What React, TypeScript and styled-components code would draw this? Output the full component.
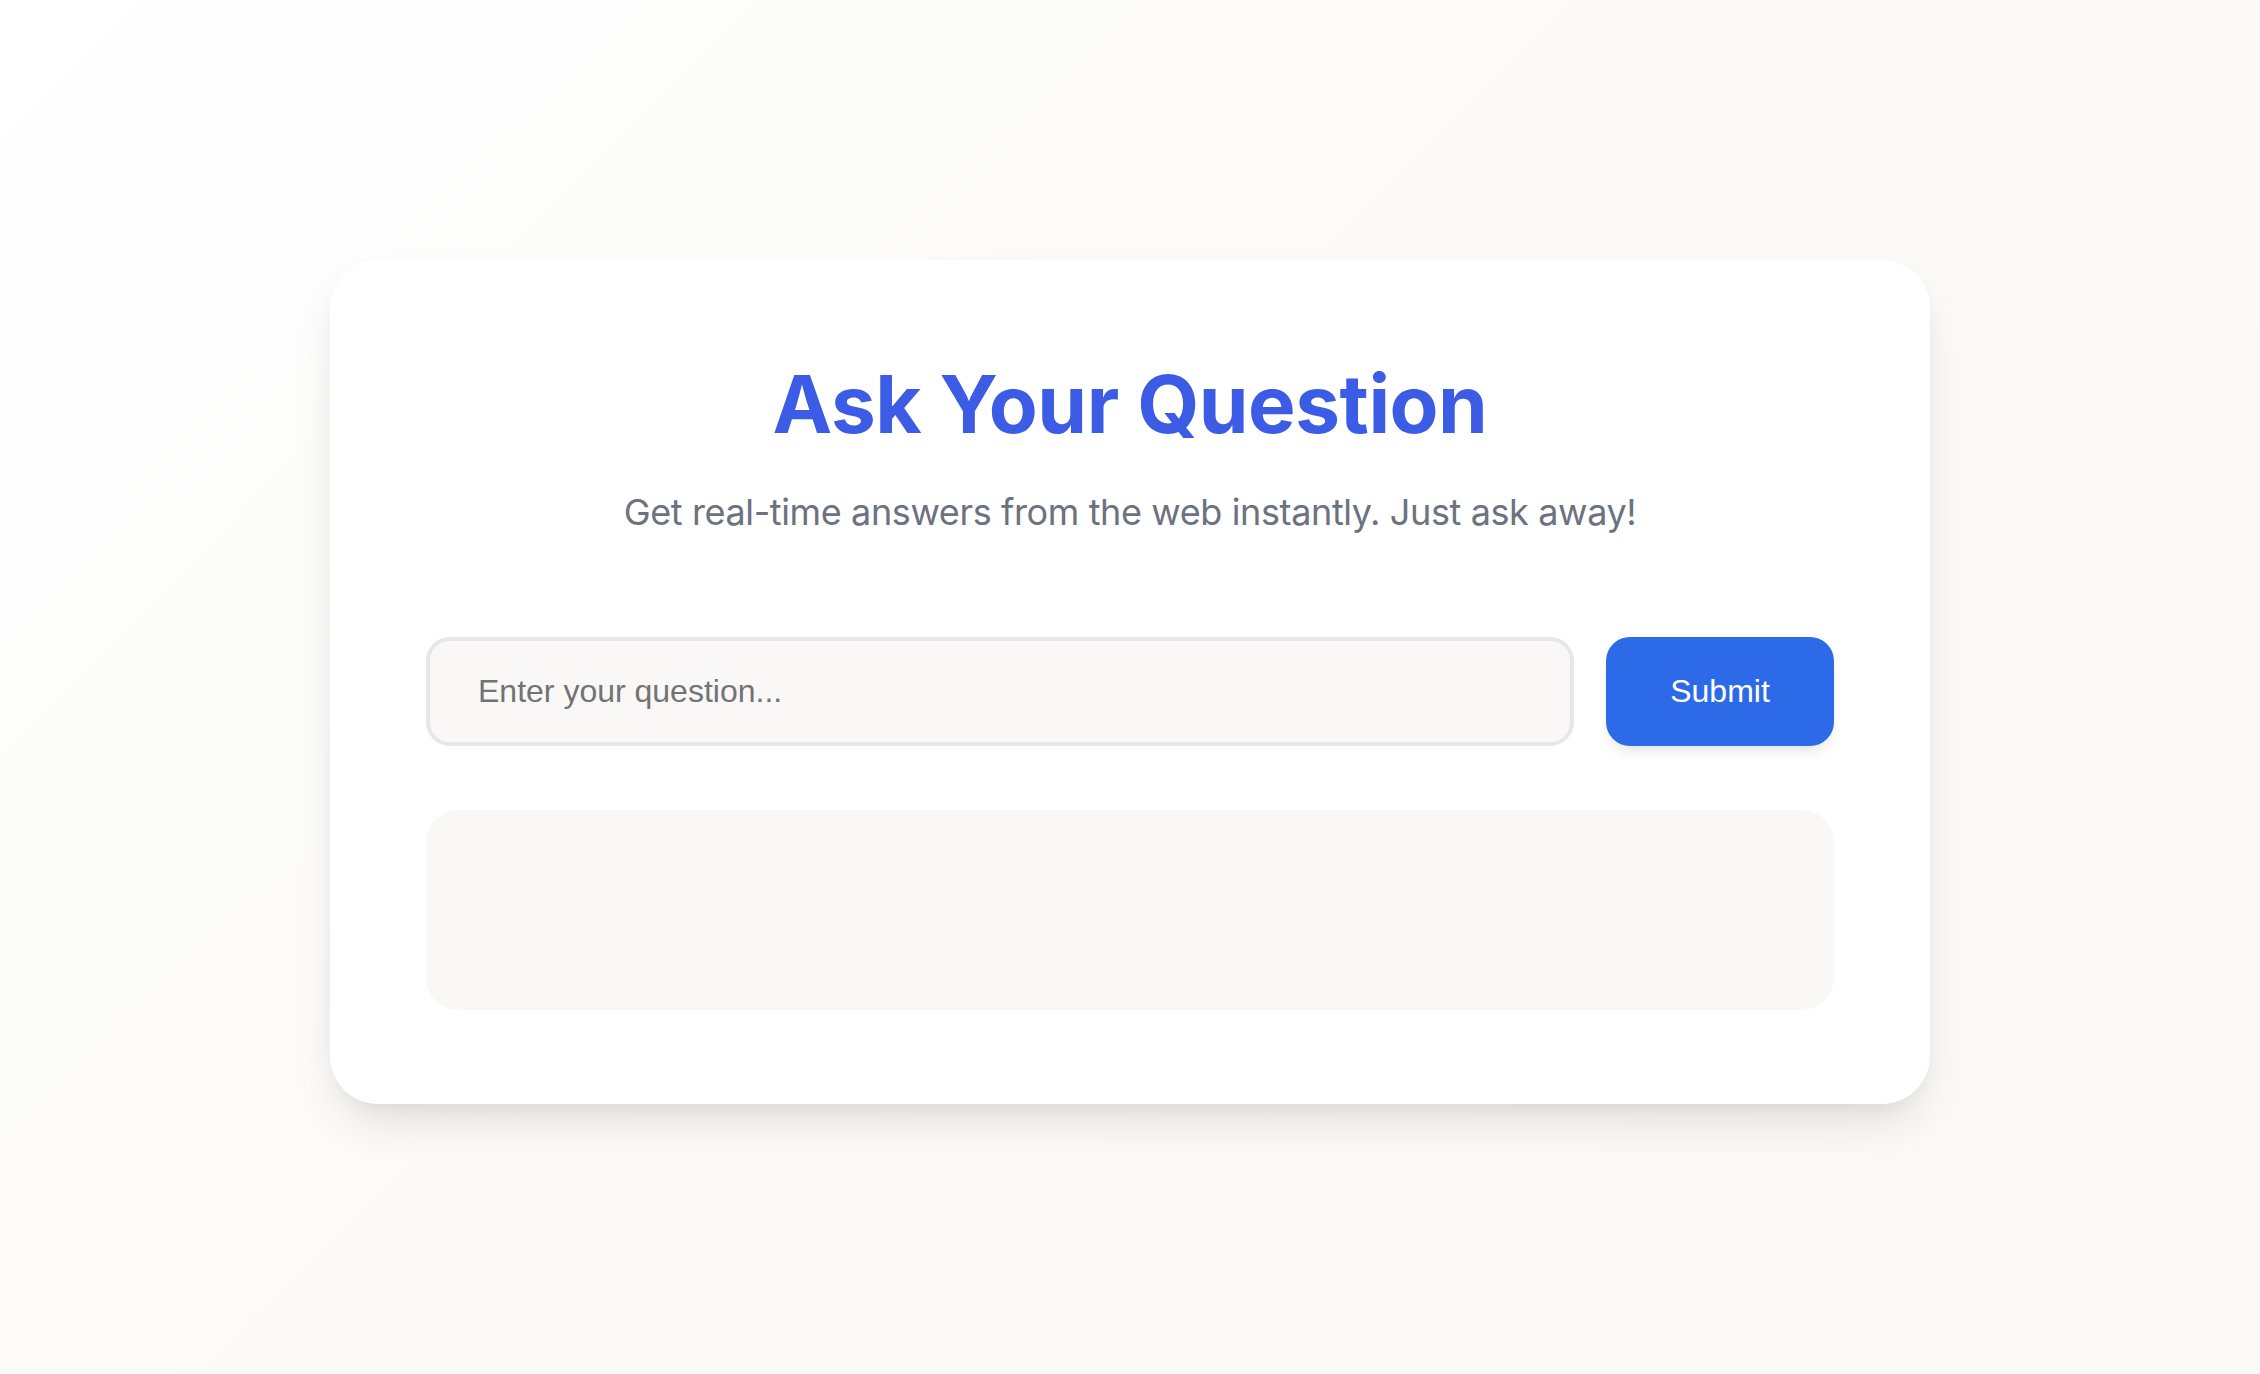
import styled, { createGlobalStyle } from "styled-components";

const GlobalStyle = createGlobalStyle`
  html, body {
    margin: 0;
    padding: 0;
  }
  body {
    background: linear-gradient(135deg, #ffffff 0%, #fbfaf9 45%, #faf9f7 100%);
    font-family: "Inter", "Liberation Sans", sans-serif;
  }
  * {
    box-sizing: border-box;
  }
`;

const Page = styled.main`
  min-height: 100vh;
  display: flex;
  align-items: center;
  justify-content: center;
  padding-bottom: 10px;
`;

const Card = styled.section`
  width: 1600px;
  background: #ffffff;
  border-radius: 48px;
  padding: 96px 96px 94px;
  box-shadow: 0 24px 48px -12px rgba(0, 0, 0, 0.13),
    0 8px 20px -8px rgba(0, 0, 0, 0.06);
  display: flex;
  flex-direction: column;
`;

const Title = styled.h1`
  margin: 0;
  font-family: "Inter", sans-serif;
  font-size: 80px;
  line-height: 96px;
  font-weight: 700;
  letter-spacing: -0.5px;
  color: #3d5ce5;
  text-align: center;
`;

const Subtitle = styled.p`
  margin: 33px 0 0;
  font-family: "Inter", sans-serif;
  font-size: 36px;
  line-height: 54px;
  letter-spacing: -0.38px;
  color: #6b7280;
  text-align: center;
`;

const Form = styled.form`
  margin-top: 98px;
  display: flex;
  gap: 32px;
  height: 109px;
`;

const Input = styled.input`
  flex: 1;
  height: 100%;
  padding: 0 48px;
  border: 4px solid #e5e7eb;
  border-radius: 24px;
  background: #f9f8f7;
  font-family: "Liberation Sans", Arial, sans-serif;
  font-size: 32px;
  color: #374151;
  outline: none;

  &::placeholder {
    color: #737373;
  }
`;

const Button = styled.button`
  width: 228px;
  height: 100%;
  border: none;
  border-radius: 24px;
  background: #2c6ae8;
  color: #ffffff;
  font-family: "Liberation Sans", Arial, sans-serif;
  font-size: 32px;
  cursor: pointer;
  box-shadow: 0 8px 16px -6px rgba(0, 0, 0, 0.15);
`;

const Answer = styled.div`
  margin-top: 64px;
  height: 200px;
  border-radius: 32px;
  background: #f9f8f7;
`;

export default function App() {
  return (
    <>
      <GlobalStyle />
      <Page>
        <Card>
          <Title>Ask Your Question</Title>
          <Subtitle>
            Get real-time answers from the web instantly. Just ask away!
          </Subtitle>
          <Form onSubmit={(e) => e.preventDefault()}>
            <Input type="text" placeholder="Enter your question..." />
            <Button type="submit">Submit</Button>
          </Form>
          <Answer />
        </Card>
      </Page>
    </>
  );
}
